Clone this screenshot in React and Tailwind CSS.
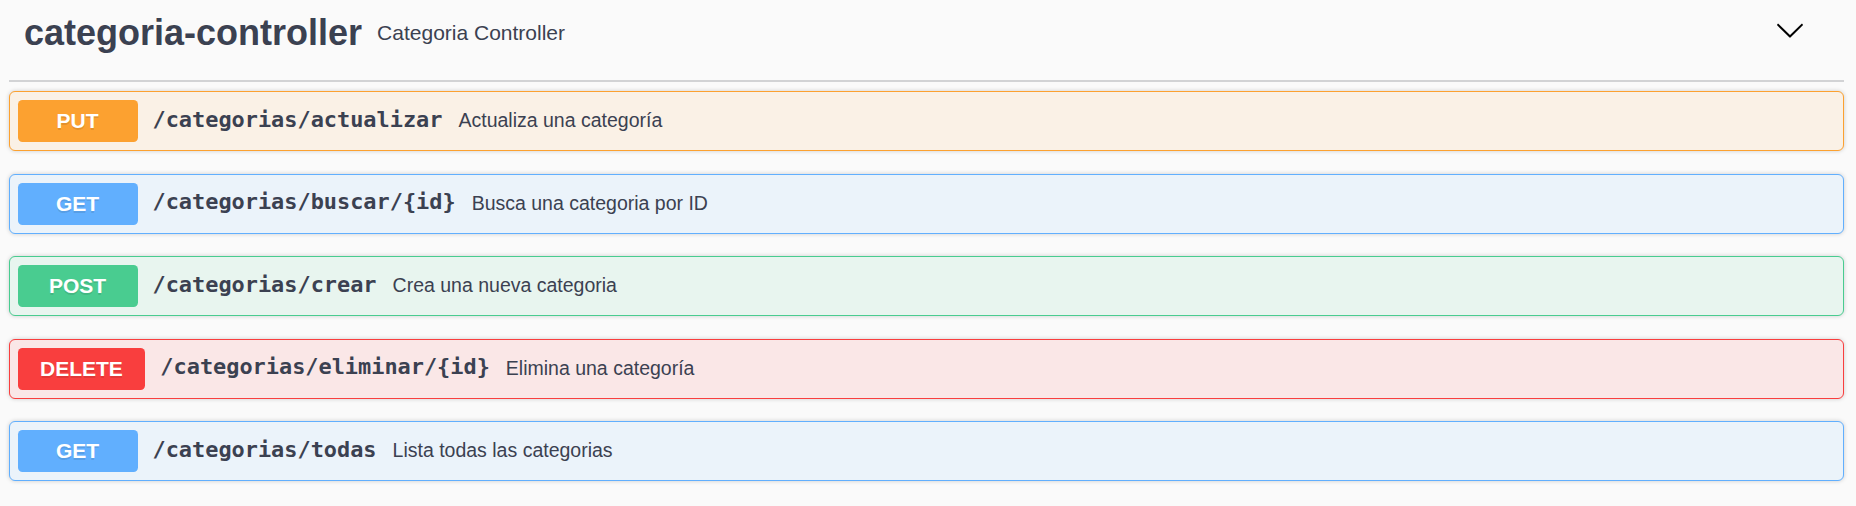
const operations = [
  {
    method: 'PUT',
    path: '/categorias/actualizar',
    summary: 'Actualiza una categoría',
    badge: 'bg-[#fca130]',
    box: 'border-[#fca130] bg-[#faf1e6]',
  },
  {
    method: 'GET',
    path: '/categorias/buscar/{id}',
    summary: 'Busca una categoria por ID',
    badge: 'bg-[#61affe]',
    box: 'border-[#61affe] bg-[#ebf3fa]',
  },
  {
    method: 'POST',
    path: '/categorias/crear',
    summary: 'Crea una nueva categoria',
    badge: 'bg-[#49cc90]',
    box: 'border-[#49cc90] bg-[#e8f5ef]',
  },
  {
    method: 'DELETE',
    path: '/categorias/eliminar/{id}',
    summary: 'Elimina una categoría',
    badge: 'bg-[#f93e3e]',
    box: 'border-[#f93e3e] bg-[#fae7e7]',
  },
  {
    method: 'GET',
    path: '/categorias/todas',
    summary: 'Lista todas las categorias',
    badge: 'bg-[#61affe]',
    box: 'border-[#61affe] bg-[#ebf3fa]',
  },
];

function ArrowDown() {
  return (
    <svg width="30" height="30" viewBox="0 0 20 20" className="mb-[6px] shrink-0" fill="#000">
      <path d="M17.418 6.109c.272-.268.709-.268.979 0s.271.701 0 .969l-7.908 7.83c-.27.268-.707.268-.979 0l-7.908-7.83c-.27-.268-.27-.701 0-.969.271-.268.709-.268.979 0L10 13.25l7.418-7.141z" />
    </svg>
  );
}

function Operation({ op }) {
  return (
    <div
      className={`flex items-center h-[60px] px-[7.5px] border rounded-[6px] shadow-[0_0_4.5px_rgba(0,0,0,0.19)] ${op.box}`}
    >
      <span
        className={`flex items-center justify-center h-[42px] min-w-[120px] px-[22.5px] rounded-[4.5px] text-white font-bold text-[21px] [text-shadow:0_1.5px_0_rgba(0,0,0,0.1)] ${op.badge}`}
      >
        {op.method}
      </span>
      <span className="pl-[15px] pr-[16px] mb-[2px] font-['DejaVu_Sans_Mono',monospace] font-bold text-[21.9px] text-[#3b4151] whitespace-nowrap">
        {op.path}
      </span>
      <span className="flex-1 text-[19.5px] text-[#3b4151]">{op.summary}</span>
    </div>
  );
}

export default function App() {
  return (
    <div className="min-h-screen bg-[#fafafa] pl-[9px] pr-[12px] font-['Liberation_Sans',Arial,sans-serif]">
      {/* tag header */}
      <div className="flex items-center h-[82px] pb-[14px] pr-[39px] border-b-2 border-[#d2d3d5]">
        <h4 className="pl-[15px] text-[36px] font-bold text-[#3b4151] whitespace-nowrap">categoria-controller</h4>
        <small className="flex-1 pl-[15px] text-[21px] text-[#3b4151]">Categoria Controller</small>
        <ArrowDown />
      </div>

      <div className="flex flex-col gap-[22.5px] mt-[9px]">
        {operations.map((op) => (
          <Operation key={op.method + op.path} op={op} />
        ))}
      </div>
    </div>
  );
}
